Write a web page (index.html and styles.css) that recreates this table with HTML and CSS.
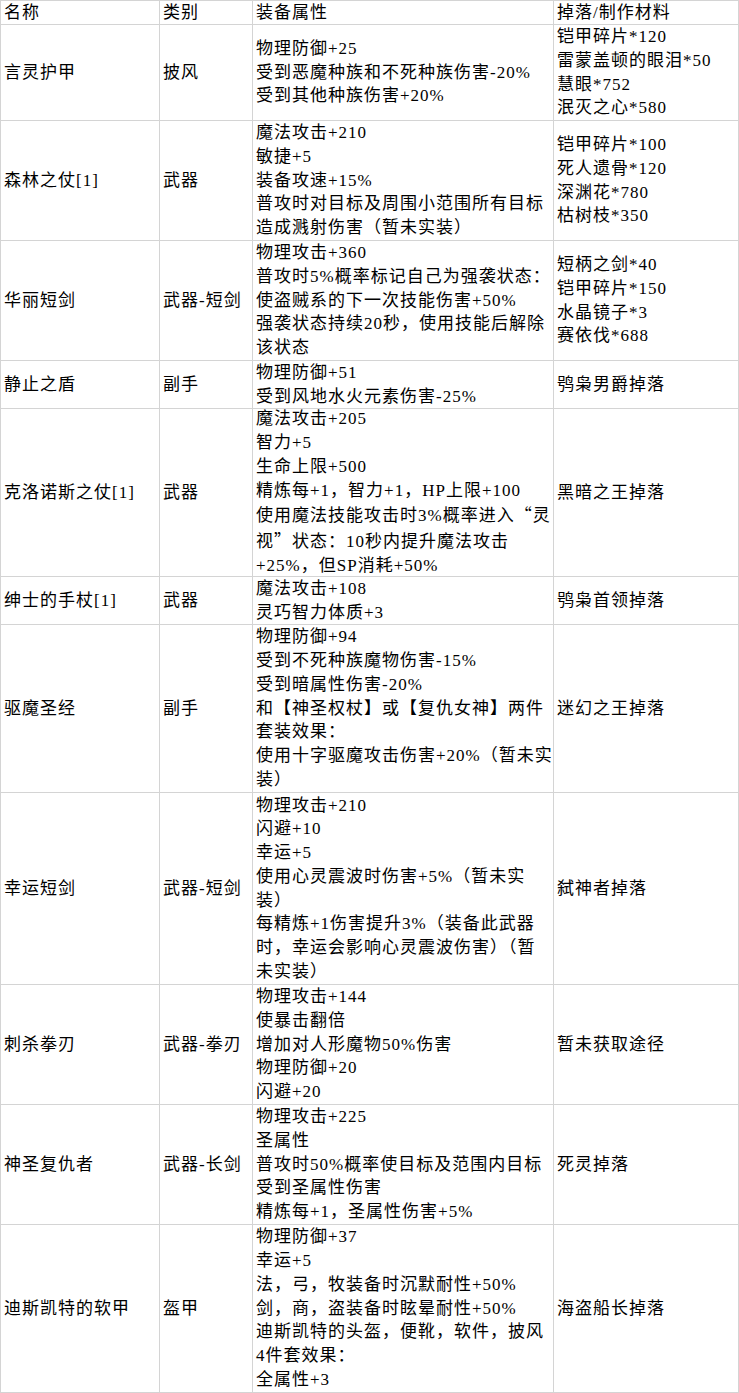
FILE: index.html
```html
<!DOCTYPE html>
<html lang="zh-CN">
<head>
<meta charset="utf-8">
<title>装备列表</title>
<link rel="stylesheet" href="styles.css">
</head>
<body>
<div class="sheet">
  <div class="c head"><span>名称</span></div>
  <div class="c head"><span>类别</span></div>
  <div class="c head"><span>装备属性</span></div>
  <div class="c head"><span>掉落/制作材料</span></div>

  <div class="c"><span>言灵护甲</span></div>
  <div class="c"><span>披风</span></div>
  <div class="c"><span>物理防御+25<br>受到恶魔种族和不死种族伤害-20%<br>受到其他种族伤害+20%</span></div>
  <div class="c"><span>铠甲碎片*120<br>雷蒙盖顿的眼泪*50<br>慧眼*752<br>泯灭之心*580</span></div>

  <div class="c"><span>森林之仗[1]</span></div>
  <div class="c"><span>武器</span></div>
  <div class="c"><span>魔法攻击+210<br>敏捷+5<br>装备攻速+15%<br>普攻时对目标及周围小范围所有目标<br>造成溅射伤害（暂未实装）</span></div>
  <div class="c"><span>铠甲碎片*100<br>死人遗骨*120<br>深渊花*780<br>枯树枝*350</span></div>

  <div class="c"><span>华丽短剑</span></div>
  <div class="c"><span>武器-短剑</span></div>
  <div class="c"><span>物理攻击+360<br>普攻时5%概率标记自己为强袭状态：<br>使盗贼系的下一次技能伤害+50%<br>强袭状态持续20秒，使用技能后解除<br>该状态</span></div>
  <div class="c"><span>短柄之剑*40<br>铠甲碎片*150<br>水晶镜子*3<br>赛依伐*688</span></div>

  <div class="c"><span>静止之盾</span></div>
  <div class="c"><span>副手</span></div>
  <div class="c"><span>物理防御+51<br>受到风地水火元素伤害-25%</span></div>
  <div class="c"><span>鸮枭男爵掉落</span></div>

  <div class="c"><span>克洛诺斯之仗[1]</span></div>
  <div class="c"><span>武器</span></div>
  <div class="c"><span>魔法攻击+205<br>智力+5<br>生命上限+500<br>精炼每+1，智力+1，HP上限+100<br>使用魔法技能攻击时3%概率进入<span class="q">“</span>灵<br>视<span class="q">”</span>状态：10秒内提升魔法攻击<br>+25%，但SP消耗+50%</span></div>
  <div class="c"><span>黑暗之王掉落</span></div>

  <div class="c"><span>绅士的手杖[1]</span></div>
  <div class="c"><span>武器</span></div>
  <div class="c"><span>魔法攻击+108<br>灵巧智力体质+3</span></div>
  <div class="c"><span>鸮枭首领掉落</span></div>

  <div class="c"><span>驱魔圣经</span></div>
  <div class="c"><span>副手</span></div>
  <div class="c"><span>物理防御+94<br>受到不死种族魔物伤害-15%<br>受到暗属性伤害-20%<br>和【神圣权杖】或【复仇女神】两件<br>套装效果：<br>使用十字驱魔攻击伤害+20%（暂未实<br>装）</span></div>
  <div class="c"><span>迷幻之王掉落</span></div>

  <div class="c"><span>幸运短剑</span></div>
  <div class="c"><span>武器-短剑</span></div>
  <div class="c"><span>物理攻击+210<br>闪避+10<br>幸运+5<br>使用心灵震波时伤害+5%（暂未实<br>装）<br>每精炼+1伤害提升3%（装备此武器<br>时，幸运会影响心灵震波伤害）（暂<br>未实装）</span></div>
  <div class="c"><span>弑神者掉落</span></div>

  <div class="c"><span>刺杀拳刃</span></div>
  <div class="c"><span>武器-拳刃</span></div>
  <div class="c"><span>物理攻击+144<br>使暴击翻倍<br>增加对人形魔物50%伤害<br>物理防御+20<br>闪避+20</span></div>
  <div class="c"><span>暂未获取途径</span></div>

  <div class="c"><span>神圣复仇者</span></div>
  <div class="c"><span>武器-长剑</span></div>
  <div class="c"><span>物理攻击+225<br>圣属性<br>普攻时50%概率使目标及范围内目标<br>受到圣属性伤害<br>精炼每+1，圣属性伤害+5%</span></div>
  <div class="c"><span>死灵掉落</span></div>

  <div class="c"><span>迪斯凯特的软甲</span></div>
  <div class="c"><span>盔甲</span></div>
  <div class="c"><span>物理防御+37<br>幸运+5<br>法，弓，牧装备时沉默耐性+50%<br>剑，商，盗装备时眩晕耐性+50%<br>迪斯凯特的头盔，便靴，软件，披风<br>4件套效果：<br>全属性+3</span></div>
  <div class="c"><span>海盗船长掉落</span></div>
</div>
</body>
</html>
```

FILE: styles.css
```css
html, body {
  margin: 0;
  padding: 0;
  background: #ffffff;
}

.sheet {
  width: 739px;
  height: 1393px;
  box-sizing: border-box;
  display: grid;
  grid-template-columns: 158px 92px 300px 184px;
  grid-template-rows: 23px 95px 119px 119px 47px 167px 47px 167px 191px 119px 119px 167px;
  gap: 1px;
  padding: 1px;
  background: #d4d4d4;
  font-family: "Liberation Sans Narrow", "Liberation Serif", "Noto Sans CJK SC", sans-serif;
  font-size: 17px;
  letter-spacing: 1px;
  color: #000000;
}

.c {
  background: #ffffff;
  display: flex;
  align-items: center;
  padding: 0 3px;
  line-height: 23.75px;
  white-space: nowrap;
  overflow: visible;
}

.q {
  font-family: "Noto Sans CJK SC", sans-serif;
}
```
